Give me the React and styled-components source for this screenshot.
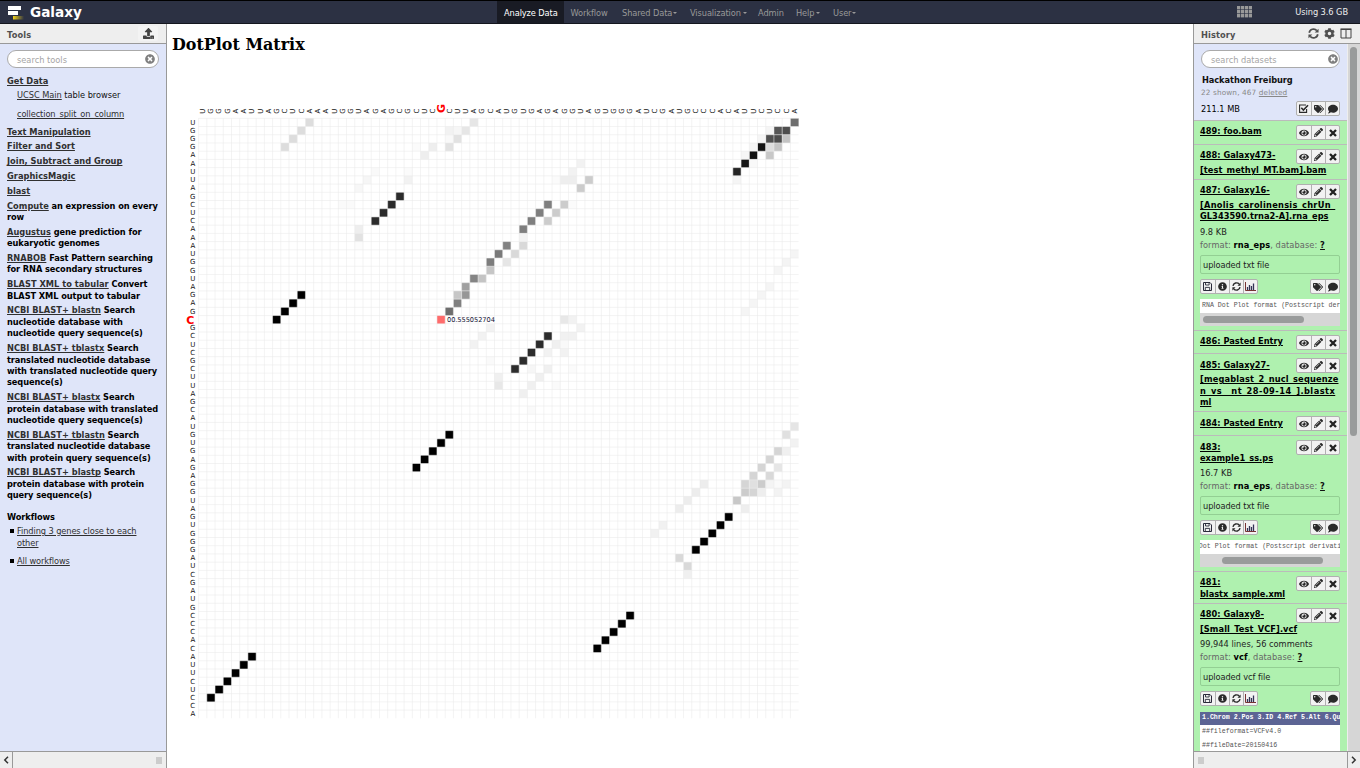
import React from "react";
import styled, { createGlobalStyle, css } from "styled-components";
import {
  FaUpload, FaTimesCircle, FaCog, FaEye, FaPencilAlt, FaTags, FaComment,
  FaInfoCircle,
} from "react-icons/fa";

const Global = createGlobalStyle`
  * { box-sizing: border-box; }
  html, body { margin: 0; padding: 0; overflow: hidden; background: #fff; }
  body { font-family: "DejaVu Sans", sans-serif; font-size: 8.25px; color: #000; }
`;

const Shell = styled.div`
  width: 1360px; height: 768px; display: flex; flex-direction: column; overflow: hidden;
`;

/* ---------- masthead ---------- */
const Masthead = styled.header`
  height: 24px; flex: none; display: flex; align-items: stretch;
  background: #2c3143; border-top: 1px solid #000; border-bottom: 1px solid #14161e;
`;
const Brand = styled.div`
  width: 497px; display: flex; align-items: center; padding-left: 8px; gap: 6px;
  color: #fff; font-weight: bold; font-size: 13.6px;
`;
const NavItem = styled.div`
  width: ${(p) => p.$w}px; padding-left: 7px; line-height: 24px; white-space: nowrap;
  letter-spacing: -0.1px;
  color: ${(p) => (p.$active ? "#fff" : "#999")};
  background: ${(p) => (p.$active ? "#191b24" : "transparent")};
`;
const Caret = styled.span`
  display: inline-block; vertical-align: 2px; margin-left: ${(p) => p.$gap || 1}px;
  border: 2px solid transparent; border-top-color: #999; border-bottom: 0;
`;
const MastRight = styled.div`
  margin-left: auto; display: flex; align-items: center; gap: 43px; padding-right: 12px; color: #eee;
  letter-spacing: -0.07px;
`;

/* ---------- shared panel parts ---------- */
const Body = styled.div`flex: 1; min-height: 0; display: flex;`;
const Panel = styled.aside`
  flex: none; display: flex; flex-direction: column; background: #dfe5f9; width: 167px;
  ${(p) => (p.$right ? "border-left: 1px solid #999;" : "border-right: 1px solid #999;")}
`;
const PanelHead = styled.div`
  height: 20px; flex: none; background: #eee; border-bottom: 1px solid #999; color: #505050;
  font-weight: bold; display: flex; align-items: center; justify-content: space-between;
  letter-spacing: 0.12px; padding: 2px ${(p) => p.$pr || 0}px 0 7px;
`;
const HeadIcons = styled.div`display: flex; align-items: center; gap: 5px; margin-top: -2px;`;
const UploadBtn = styled.div`
  width: 20px; height: 15px; display: flex; align-items: center; justify-content: center;
  background: #f3f3f3; border-radius: 2px; color: #444; font-size: 11px; margin-top: -2px;
`;
const Search = styled.div`
  height: 18px; width: ${(p) => p.$w}px; border: 1px solid #aaa; border-radius: 9px; background: #fff;
  margin: 6px 0 0 7px; padding: 1px ${(p) => p.$pr}px 0 9px; display: flex; align-items: center;
  justify-content: space-between; color: #a5a5a5; font-size: 8.25px;
  svg { color: #808080; font-size: 10px; margin-top: -1px; }
`;
const PanelFoot = styled.div`
  height: 17px; flex: none; background: #eee; border-top: 1px solid #999; display: flex; align-items: center;
  justify-content: space-between;
`;
const FootBtn = styled.div`
  width: 13px; height: 16px; display: flex; align-items: center; justify-content: center;
  ${(p) => (p.$right ? "border-left: 1px solid #999;" : "border-right: 1px solid #999;")}
`;
const Grip = styled.div`width: 6px; height: 7px; background: #ccc; margin: 1px 4px 0;`;

/* ---------- tools ---------- */
const ToolScroll = styled.div`flex: 1; min-height: 0; overflow: hidden; white-space: nowrap;`;
const ToolList = styled.div`padding: 7.9px 0 0 7px;`;
const Link = styled.span`
  color: #303030; text-decoration: underline; text-underline-offset: 1px; text-decoration-thickness: 1px;
`;
const Section = styled.div`
  font-weight: bold; line-height: 11.4px; margin-top: ${(p) => (p.$mt === undefined ? 3.4 : p.$mt)}px;
  letter-spacing: -0.09px;
  ${Link} { letter-spacing: 0.02px; }
`;
const Tool = styled.div`
  padding-left: 10px; line-height: 12px; margin-top: ${(p) => p.$mt}px; color: #111;
  letter-spacing: ${(p) => p.$ls || -0.04}px;
`;
const ToolGap = styled.div`height: 3px;`;
const Flow = styled.div`
  display: flex; gap: 3px; line-height: 12px; margin-top: ${(p) => p.$mt}px; padding-left: 3px;
  letter-spacing: -0.1px;
`;
const Bullet = styled.i`width: 4px; height: 4px; background: #000; margin-top: 4px;`;

/* ---------- centre ---------- */
const Main = styled.main`flex: 1; min-width: 0; background: #fff; overflow: hidden;`;
const Title = styled.h1`
  margin: 11px 0 0 5px; font: bold 15.95px/20px "DejaVu Serif", serif; color: #000; white-space: nowrap;
`;
const Plot = styled.svg`display: block; margin: 41px 0 0 13px; font-family: "DejaVu Sans", sans-serif;`;

/* ---------- history ---------- */
const HistRow = styled.div`flex: 1; min-height: 0; display: flex;`;
const HistCol = styled.div`width: 153px; overflow: hidden; flex: none; white-space: nowrap;`;
const Track = styled.div`width: 13px; background: #d6d6d6; border-left: 1px solid #eee; padding: 3px 2px;`;
const Thumb = styled.div`width: 7px; height: 389px; border-radius: 4px; background: #999b9b;`;
const HistTop = styled.div`display: flow-root; height: 77px; border-bottom: 1px solid #bbb;`;
const HistName = styled.div`
  font-weight: bold; line-height: 12px; margin: 6px 0 0 8px; color: #111; letter-spacing: -0.08px;
`;
const Shown = styled.div`
  font-size: 7.3px; line-height: 10px; margin: 1.5px 0 0 7px; color: #888; letter-spacing: 0.13px;
`;
const SizeRow = styled.div`
  display: flex; justify-content: space-between; padding: 3.5px 7px 0 7px; line-height: 17px;
`;
const Item = styled.div`
  height: ${(p) => p.$h}px; background: #aff1af; border-bottom: 1px solid #bbb; padding: 0 7px 0 6px; overflow: hidden;
`;
const ItemHead = styled.div`display: flex; justify-content: space-between; height: ${(p) => p.$h}px;`;
const Line = styled.div`
  line-height: 12px; height: 12px; margin-top: ${(p) => p.$mt || 0}px; color: #222;
  ${(p) => p.$title && css`
    width: max-content;
    font-weight: bold; color: #000; text-decoration: underline; text-underline-offset: 1px;
    text-decoration-thickness: 1px; letter-spacing: ${p.$ls || 0}px;
  `}
`;
const Dim = styled.span`
  color: #666; letter-spacing: 0.08px;
  b { color: #000; } u { color: #111; font-weight: bold; }
`;
const Group = styled.div`
  display: flex; height: 15px; border: 1px solid #b0b0b0; border-radius: 2px; background: #f2f2f2;
  margin-top: ${(p) => p.$mt || 0}px; color: #2a2a2a;
`;
const Btn = styled.div`
  width: 13.9px; display: flex; align-items: center; justify-content: center;
  font-size: ${(p) => (p.$big ? 10 : 9)}px;
  & + & { border-left: 1px solid #b0b0b0; }
`;
const Info = styled.div`
  height: 19px; border: 1px solid #93cf93; border-radius: 2px; line-height: 18px; padding-left: 2px;
  margin-top: 4px; color: #222; letter-spacing: -0.08px;
`;
const Actions = styled.div`display: flex; justify-content: space-between; margin-top: 5px;`;
const Peek = styled.div`
  margin-top: 5px; height: 27px; overflow: hidden; background: #d6d6d6; width: 140px;
`;
const PeekText = styled.div`
  height: 14px; line-height: 13px; background: #fff; color: #555; text-indent: ${(p) => p.$in}px;
  font-family: "Liberation Mono", monospace; font-size: 6.6px;
`;
const PeekThumb = styled.div`
  width: 101px; height: 7px; border-radius: 4px; background: #999b9b; margin: 3px 0 0 ${(p) => p.$x}px;
`;
const Table = styled.div`
  margin-top: 6px; width: 140px; overflow: hidden; background: #fff; height: 60px;
  font-family: "Liberation Mono", monospace; font-size: 6.6px; color: #555;
`;
const TableHead = styled.div`
  height: 13px; line-height: 12px; background: #5c6494; color: #fff; font-weight: bold; padding-left: 2px;
`;
const TableRow = styled.div`height: 14px; line-height: 13px; padding-left: 2px;`;

/* ---------- icons ---------- */
const Logo = () => (
  <svg width="16" height="15" viewBox="0 0 16 15">
    <defs>
      <linearGradient id="gold"><stop offset="0" stopColor="#f2d21c" /><stop offset="1" stopColor="#f2d21c" stopOpacity="0" /></linearGradient>
    </defs>
    <rect x="0" y="1" width="13" height="4" fill="#fff" />
    <rect x="0" y="6" width="10" height="4" fill="#fff" />
    <rect x="5" y="11" width="11" height="3.5" fill="url(#gold)" />
  </svg>
);
const GridIcon = () => (
  <svg width="15" height="12" viewBox="0 0 15 12" fill="#999">
    {[0, 1, 2].map((r) => [0, 1, 2, 3].map((c) => (
      <rect key={`${r}${c}`} x={c * 4} y={r * 4} width="3.3" height="3.4" />
    )))}
  </svg>
);
const Refresh = ({ s = 9 }) => (
  <svg width={s} height={s} viewBox="0 0 12 12" fill="none" stroke="currentColor" strokeWidth="1.9">
    <path d="M1.3 5.2A4.8 4.8 0 0 1 9.6 2.8" />
    <path d="M10.7 6.8A4.8 4.8 0 0 1 2.4 9.2" />
    <path d="M11.5 .8V5H7.3z" fill="currentColor" stroke="none" />
    <path d="M.5 11.2V7h4.2z" fill="currentColor" stroke="none" />
  </svg>
);
const Columns = () => (
  <svg width="12" height="11" viewBox="0 0 12 11" fill="none" stroke="#444">
    <path d="M1 1.5h10v8.5H1zM6 1v9" /><path d="M.5 1.2h11" strokeWidth="1.6" />
  </svg>
);
const Cross = () => (
  <svg width="8" height="8" viewBox="0 0 8 8" stroke="#222" strokeWidth="2.3"><path d="M1 1l6 6M7 1L1 7" /></svg>
);
const Chart = () => (
  <svg width="11" height="9" viewBox="0 0 11 9">
    <path d="M.5 0v8.5H11" fill="none" stroke="#733" />
    <path d="M2.5 5v3M4.5 3v5M6.5 4v4M8.5 1.5V8" stroke="#335" strokeWidth="1.3" />
  </svg>
);
const Floppy = () => (
  <svg width="9" height="9" viewBox="0 0 9 9" fill="none" stroke="#2a2a3a">
    <path d="M.5.5H7L8.5 2v6.5h-8z" /><path d="M2.5.5v2.5h3.6V.5M2.3 8.5V5.4h4.4v3.1" strokeWidth=".9" />
  </svg>
);
const CheckBox = () => (
  <svg width="10" height="9" viewBox="0 0 10 9" fill="none" stroke="#2a2a2a">
    <path d="M7.6 5v3.4H.6V1H7" strokeWidth="1.1" /><path d="M2.3 3.8L4.4 6 9 1.3" strokeWidth="1.6" />
  </svg>
);
const Chevron = ({ d }) => (
  <svg width="6" height="8" viewBox="0 0 6 8" fill="none" stroke="#333" strokeWidth="1.5"><path d={d} /></svg>
);

/* ---------- dot plot data ---------- */
const SEQ = "UGGGAAUUAGCUCAAAUGGUAGAGCGCUCGCUUAGCAUGUGAGAGGUAGUGGGAUCGAUGCCCACAUUCUCCA";
const STEP = 600 / 73;
const HOT = { col: 29, row: 24 };

// Base-pair stems: [first column, first row, length, grey], running down-left.
const STEMS = [
  [13, 0, 4, "dd"], [24, 9, 4, "2b"], [12, 21, 4, "00"], [42, 26, 5, "2c"], [30, 38, 5, "00"],
  [64, 48, 5, "00"], [52, 60, 5, "00"], [6, 65, 6, "00"], [61, 44, 4, "ed"], [56, 49, 2, "f1"],
  [42, 10, 4, "7f"], [44, 10, 3, "cc"], [70, 40, 5, "d5"], [69, 20, 4, "f5"],
  [35, 25, 3, "f2"], [47, 7, 2, "cc"],
];
const CELLS = [
  [33, 0, "e6"], [32, 1, "e6"], [31, 2, "e2"], [30, 3, "e2"], [30, 1, "f2"], [31, 1, "f6"], [30, 2, "f9"],
  [28, 3, "ee"], [27, 4, "ee"], [26, 3, "fb"], [21, 6, "f9"], [20, 7, "f6"], [19, 8, "f7"], [25, 7, "f2"],
  [25, 6, "fb"], [19, 13, "ee"], [19, 14, "e2"], [17, 10, "fa"], [18, 10, "fa"], [19, 15, "fc"],
  [30, 23, "6e"], [31, 22, "80"], [31, 21, "c6"], [32, 21, "96"], [32, 20, "a0"], [33, 19, "84"],
  [34, 19, "c4"], [35, 18, "c6"], [35, 17, "7d"], [36, 16, "7a"], [37, 15, "82"], [38, 16, "d9"],
  [37, 17, "e6"], [39, 15, "d9"], [39, 14, "f3"],
  [72, 0, "6e"], [70, 1, "55"], [71, 1, "4e"], [69, 1, "f5"], [69, 2, "50"], [70, 2, "4c"], [71, 2, "c4"],
  [68, 2, "f5"], [68, 3, "14"], [69, 3, "dd"], [70, 3, "c4"], [67, 3, "f5"], [67, 4, "12"], [69, 4, "c8"],
  [66, 4, "f6"], [66, 5, "16"], [67, 5, "f9"], [65, 6, "24"], [65, 7, "f5"],
  [46, 5, "f2"], [45, 6, "f2"], [44, 7, "ee"], [45, 7, "ee"], [43, 7, "fb"], [45, 10, "fb"],
  [72, 16, "f5"], [71, 17, "f4"], [70, 18, "f5"],
  [44, 24, "e8"], [45, 24, "f2"], [46, 25, "f2"], [44, 26, "f1"], [45, 26, "f1"], [43, 27, "f0"],
  [44, 27, "f9"], [42, 28, "f2"], [44, 28, "f2"], [40, 30, "f6"], [42, 30, "f0"], [41, 31, "f0"],
  [36, 31, "f0"], [36, 32, "e8"], [40, 32, "f0"], [43, 32, "fa"], [39, 33, "f0"], [40, 35, "fa"],
  [45, 30, "fb"], [35, 29, "fa"],
  [72, 37, "e5"], [71, 38, "e0"], [72, 39, "f2"], [71, 40, "f0"], [70, 42, "e6"], [69, 43, "d9"],
  [67, 44, "e0"], [68, 44, "cc"], [69, 44, "f4"], [70, 44, "fa"], [71, 44, "f3"], [66, 45, "cc"],
  [67, 45, "d5"], [68, 45, "ee"], [70, 45, "f3"], [65, 46, "c8"], [66, 47, "ee"],
  [58, 53, "d9"], [59, 54, "d9"], [59, 55, "f0"],
];
const ALL = [
  ...STEMS.flatMap(([c, r, n, g]) => Array.from({ length: n }, (_, i) => [c - i, r + i, g])),
  ...CELLS,
];

function DotPlot() {
  const at = (i) => i * STEP;
  return (
    <Plot width="640" height="630" viewBox="0 0 640 630">
      <g transform="translate(18.6 22.3)">
        {ALL.map(([c, r, g], i) => (
          <rect key={i} x={at(c)} y={at(r)} width={STEP} height={STEP} fill={`#${g}${g}${g}`} />
        ))}
        <rect x={at(HOT.col)} y={at(HOT.row)} width={STEP} height={STEP} fill="#ff6c6c" />
        {Array.from({ length: 73 }, (_, i) => (
          <path key={i} d={`M${at(i)} 0V600M0 ${at(i)}H600`} stroke="#eaeaea" strokeOpacity="0.55" strokeWidth="1" />
        ))}
        <text x={at(30) + 1.8} y={at(24) + 6.6} fontSize="6.6" letterSpacing="-0.03" fill="#113">00.555052704</text>
        {SEQ.split("").map((ch, i) => {
          const hotC = i === HOT.col;
          const hotR = i === HOT.row;
          const mid = at(i) + STEP / 2;
          return (
            <g key={i} textAnchor="middle">
              <text
                transform={`translate(${mid + (hotC ? 4 : 2.3)} ${hotC ? -9.8 : -7.2}) rotate(-90)`}
                fontSize={hotC ? 11 : 7} fontWeight={hotC ? "bold" : "normal"} fill={hotC ? "red" : "#111"}
              >{ch}</text>
              <text
                x={hotR ? -8.2 : -5.8} y={mid + (hotR ? 4 : 2.2)}
                fontSize={hotR ? 11 : 7} fontWeight={hotR ? "bold" : "normal"} fill={hotR ? "red" : "#111"}
              >{ch}</text>
            </g>
          );
        })}
      </g>
    </Plot>
  );
}

const SECTIONS = [
  ["Text Manipulation"], ["Filter and Sort"], ["Join, Subtract and Group"], ["GraphicsMagic"], ["blast"],
  ["Compute", "an expression on every", "row"],
  ["Augustus", "gene prediction for", "eukaryotic genomes"],
  ["RNABOB", "Fast Pattern searching", "for RNA secondary structures"],
  ["BLAST XML to tabular", "Convert", "BLAST XML output to tabular"],
  ["NCBI BLAST+ blastn", "Search", "nucleotide database with", "nucleotide query sequence(s)"],
  ["NCBI BLAST+ tblastx", "Search", "translated nucleotide database", "with translated nucleotide query", "sequence(s)"],
  ["NCBI BLAST+ blastx", "Search", "protein database with translated", "nucleotide query sequence(s)"],
  ["NCBI BLAST+ tblastn", "Search", "translated nucleotide database", "with protein query sequence(s)"],
  ["NCBI BLAST+ blastp", "Search", "protein database with protein", "query sequence(s)"],
];

const ItemButtons = ({ mt = 4 }) => (
  <Group $mt={mt}><Btn $big><FaEye /></Btn><Btn><FaPencilAlt /></Btn><Btn><Cross /></Btn></Group>
);

function Dataset({ h, top = 5, btn, lines, children }) {
  return (
    <Item $h={h}>
      <ItemHead $h={top + 12}>
        <Line $title $mt={top}>{lines[0][0]}</Line>
        <ItemButtons mt={btn} />
      </ItemHead>
      {lines.slice(1).map(([t, mt, ls]) => <Line key={t} $title $mt={mt} $ls={ls}>{t}</Line>)}
      {children}
    </Item>
  );
}

const Details = ({ size, format, info, mt = 4, gap = 1 }) => (
  <>
    <Line $mt={mt}>{size}</Line>
    <Line $mt={gap}><Dim>format: <b>{format}</b>, database: <u>?</u></Dim></Line>
    <Info>{info}</Info>
    <Actions>
      <Group><Btn><Floppy /></Btn><Btn><FaInfoCircle /></Btn><Btn><Refresh /></Btn><Btn><Chart /></Btn></Group>
      <Group><Btn $big><FaTags /></Btn><Btn $big><FaComment /></Btn></Group>
    </Actions>
  </>
);

export default function App() {
  return (
    <Shell>
      <Global />
      <Masthead>
        <Brand><Logo />Galaxy</Brand>
        <NavItem $w={66.5} $active>Analyze Data</NavItem>
        <NavItem $w={51.5}>Workflow</NavItem>
        <NavItem $w={68}>Shared Data<Caret /></NavItem>
        <NavItem $w={68}>Visualization<Caret $gap={2} /></NavItem>
        <NavItem $w={38}>Admin</NavItem>
        <NavItem $w={37}>Help<Caret $gap={2} /></NavItem>
        <NavItem $w={40}>User<Caret /></NavItem>
        <MastRight><GridIcon /><span>Using 3.6 GB</span></MastRight>
      </Masthead>
      <Body>
        <Panel>
          <PanelHead $pr={8}>Tools<UploadBtn><FaUpload /></UploadBtn></PanelHead>
          <ToolScroll>
            <Search $w={152} $pr={3}>search tools<FaTimesCircle /></Search>
            <ToolList>
              <Section $mt={0}><Link>Get Data</Link></Section>
              <Tool $mt={2}><Link>UCSC Main</Link> table browser</Tool>
              <Tool $mt={7} $ls={-0.11}><Link>collection_split_on_column</Link></Tool>
              <ToolGap />
              {SECTIONS.map(([link, rest, ...more]) => (
                <Section key={link}>
                  <Link>{link}</Link>{rest && ` ${rest}`}
                  {more.map((m) => <div key={m}>{m}</div>)}
                </Section>
              ))}
              <Section $mt={10}>Workflows</Section>
              <Flow $mt={2}><Bullet /><div><Link>Finding 3 genes close to each</Link><br /><Link>other</Link></div></Flow>
              <Flow $mt={6}><Bullet /><Link>All workflows</Link></Flow>
            </ToolList>
          </ToolScroll>
          <PanelFoot><FootBtn><Chevron d="M5 .8L1.8 4 5 7.2" /></FootBtn><Grip /></PanelFoot>
        </Panel>

        <Main>
          <Title>DotPlot Matrix</Title>
          <DotPlot />
        </Main>

        <Panel $right>
          <PanelHead $pr={8}>
            History
            <HeadIcons><Refresh s={11} /><FaCog size={11} /><Columns /></HeadIcons>
          </PanelHead>
          <HistRow>
            <HistCol>
              <HistTop>
                <Search $w={139} $pr={1}>search datasets<FaTimesCircle /></Search>
                <HistName>Hackathon Freiburg</HistName>
                <Shown>22 shown, 467 <u>deleted</u></Shown>
                <SizeRow>
                  211.1 MB
                  <Group><Btn><CheckBox /></Btn><Btn $big><FaTags /></Btn><Btn $big><FaComment /></Btn></Group>
                </SizeRow>
              </HistTop>
              <Dataset h={24} top={4} btn={4} lines={[["489: foo.bam"]]} />
              <Dataset h={35} top={4} lines={[["488: Galaxy473-"], ["[test_methyl_MT.bam].bam", 3, 0.04]]} />
              <Dataset h={151} top={4} lines={[["487: Galaxy16-"], ["[Anolis_carolinensis_chrUn_", 3, 0.27], ["GL343590.trna2-A].rna_eps", -1, 0.04]]}>
                <Details size="9.8 KB" format="rna_eps" info="uploaded txt file" />
                <Peek><PeekText $in={2}>RNA Dot Plot format (Postscript derivative)</PeekText><PeekThumb $x={3} /></Peek>
              </Dataset>
              <Dataset h={23} top={4} btn={4} lines={[["486: Pasted Entry"]]} />
              <Dataset h={58} lines={[["485: Galaxy27-"], ["[megablast_2_nucl_sequenze", 2, 0.16], ["n_vs__nt_28-09-14_].blastx", 0, 0.46], ["ml", -1]]} />
              <Dataset h={24} top={5} lines={[["484: Pasted Entry"]]} />
              <Dataset h={136} lines={[["483:"], ["example1_ss.ps", -1]]}>
                <Details size="16.7 KB" format="rna_eps" info="uploaded txt file" mt={3} gap={1} />
                <Peek><PeekText $in={-17}>RNA Dot Plot format (Postscript derivative)</PeekText><PeekThumb $x={22} /></Peek>
              </Dataset>
              <Dataset h={32} top={4} lines={[["481:"], ["blastx_sample.xml", 0, -0.05]]} />
              <Dataset h={150} top={4} lines={[["480: Galaxy8-"], ["[Small_Test_VCF].vcf", 3, 0.08]]}>
                <Details size="99,944 lines, 56 comments" format="vcf" info="uploaded vcf file" mt={3} />
                <Table>
                  <TableHead>1.Chrom 2.Pos 3.ID 4.Ref 5.Alt 6.Qual</TableHead>
                  <TableRow>##fileformat=VCFv4.0</TableRow>
                  <TableRow>##fileDate=20150416</TableRow>
                </Table>
              </Dataset>
            </HistCol>
            <Track><Thumb /></Track>
          </HistRow>
          <PanelFoot><Grip /><FootBtn $right><Chevron d="M1 .8L4.2 4 1 7.2" /></FootBtn></PanelFoot>
        </Panel>
      </Body>
    </Shell>
  );
}
